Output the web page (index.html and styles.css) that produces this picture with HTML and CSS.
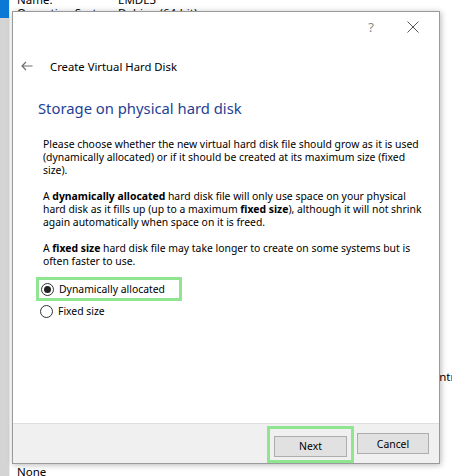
FILE: index.html
```html
<!DOCTYPE html>
<html>
<head>
<meta charset="utf-8">
<link rel="stylesheet" href="styles.css">
</head>
<body>
<div class="app">
  <div class="row r-name"><span class="k">Name:</span><span class="v">EMDE3</span></div>
  <div class="row r-os"><span class="k">Operating System:</span><span class="v">Debian (64-bit)</span></div>
  <div class="sep s1"></div>
  <div class="sep s2"></div>
  <div class="row r-ctl"><span class="ctl">Controller: SATA</span></div>
  <div class="sep s3"></div>
  <div class="sep s4"></div>
  <div class="row r-none"><span class="k">None</span></div>
</div>

<div class="dialog">
  <div class="titlebar">
    <span class="help">?</span>
    <svg class="close" width="12" height="12" viewBox="0 0 12 12"><path d="M0.5 0.5 L11.5 11.5 M11.5 0.5 L0.5 11.5" stroke="#555" stroke-width="1" fill="none"/></svg>
  </div>
  <div class="nav">
    <svg class="back" width="12" height="10" viewBox="0 0 12 10"><path d="M11.5 5 H1 M5 1 L1 5 L5 9" stroke="#6e6e6e" stroke-width="1.2" fill="none"/></svg>
    <span class="wtitle">Create Virtual Hard Disk</span>
  </div>
  <div class="content">
    <h1 class="heading">Storage on physical hard disk</h1>
    <p class="para">Please choose whether the new virtual hard disk file should grow as it is used (dynamically allocated) or if it should be created at its maximum size (fixed size).</p>
    <p class="para">A <b>dynamically allocated</b> hard disk file will only use space on your physical hard disk as it fills up (up to a maximum <b>fixed size</b>), although it will not shrink again automatically when space on it is freed.</p>
    <p class="para">A <b>fixed size</b> hard disk file may take longer to create on some systems but is often faster to use.</p>
    <div class="hl radio-hl">
      <label class="radio"><span class="dot checked"></span>Dynamically allocated</label>
    </div>
    <label class="radio r2"><span class="dot"></span>Fixed size</label>
  </div>
  <div class="footer">
    <div class="hl btn-hl"><button class="btn">Next</button></div>
    <button class="btn">Cancel</button>
  </div>
</div>
</body>
</html>
```

FILE: styles.css
```css
* { box-sizing: border-box; }
html, body { margin: 0; padding: 0; }
body {
  width: 452px; height: 476px; overflow: hidden; position: relative;
  font-family: "Noto Sans", "Open Sans", sans-serif;
  color: #000;
}
.app {
  width: 452px; height: 476px;
  display: flex; flex-direction: column;
  background:
    linear-gradient(#0a78d4, #0a78d4) 0 0 / 9px 18px no-repeat,
    linear-gradient(to right, #d4d4d4 0 9px, #ececec 9px 10px, #fff 10px);
  font-size: 11.5px;
}
.row { height: 13px; line-height: 13px; display: flex; white-space: nowrap; }
.k { padding-left: 17px; box-sizing: content-box; width: 101px; flex: none; }
.r-name { margin-top: -7px; }
.r-os { margin-top: 0px; }
.sep { height: 1px; background: #d9d9d9; }
.s1 { margin-top: 9px; }
.s2 { margin-top: 169px; }
.r-ctl { margin-top: 173px; padding-left: 425px; }
.s3 { margin-top: 3px; }
.s4 { margin-top: 56px; }
.r-none { margin-top: 23px; }

.dialog {
  position: absolute; left: 12px; top: 11px; width: 428px; height: 453px;
  background: #fff;
  border: 1px solid #9a9a9a;
  box-shadow: 1px 1px 6px rgba(0,0,0,0.28);
  display: flex; flex-direction: column;
}
.titlebar {
  height: 30px; display: flex; align-items: center; justify-content: flex-end;
  padding-right: 20px;
}
.help { font-size: 13px; color: #8a8a8a; margin-right: 33px; line-height: 1; }
.close { display: block; }
.nav {
  margin-top: 14px; height: 20px; display: flex; align-items: center;
}
.back { margin-left: 8px; margin-right: 17px; }
.wtitle { font-size: 11.3px; }
.content { padding-left: 25px; flex: 1; }
.heading {
  margin: 21px 0 0 0; font-weight: normal; font-size: 14.8px; line-height: 22px;
  color: #1f3f95;
}
.para {
  margin: 19px 0 0 5px; font-size: 10.4px; line-height: 13px; width: 385px;
}
.para + .para { margin-top: 13px; }
.para b { font-weight: bold; }
.hl { border: 3px solid #90e690; }
.radio-hl {
  width: 146px; height: 24px; margin-top: 9px; margin-left: -2px;
  display: flex; align-items: center; padding-left: 2px;
}
.radio {
  display: flex; align-items: center; font-size: 10.4px; height: 14px;
}
.dot {
  width: 13px; height: 13px; border-radius: 50%; border: 1px solid #333;
  background: #fff; margin-right: 5px; position: relative; flex: none;
}
.dot.checked::after {
  content: ""; position: absolute; left: 2px; top: 2px; width: 7px; height: 7px;
  border-radius: 50%; background: #222;
}
.r2 { margin-top: 3px; margin-left: 2px; }
.footer {
  height: 40px; background: #f0f0f0; border-top: 1px solid #dfdfdf;
  display: flex; justify-content: flex-end; align-items: flex-start;
  padding: 2px 10px 0 0;
}
.btn-hl { padding: 4px 4px 3px 4px; margin-right: 3px; }
.btn {
  width: 73px; height: 21px; margin: 0; padding: 0;
  background: #e1e1e1; border: 1px solid #adadad;
  font-family: inherit; font-size: 10.4px; color: #000;
}
.btn-hl + .btn { margin-top: 7px; width: 72px; }
```
